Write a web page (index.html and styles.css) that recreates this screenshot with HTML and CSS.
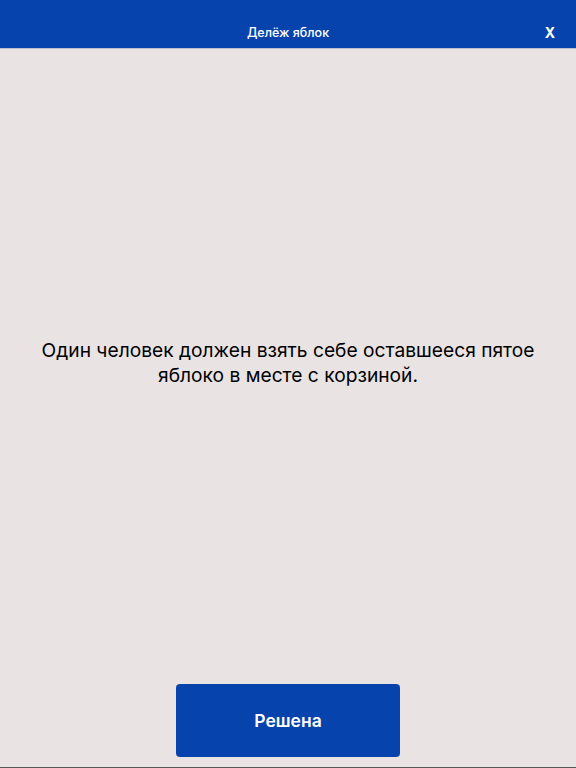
FILE: index.html
```html
<!DOCTYPE html>
<html lang="ru">
<head>
<meta charset="utf-8">
<title>Делёж яблок</title>
<link rel="stylesheet" href="styles.css">
</head>
<body>
<div class="screen">
  <header class="topbar">
    <div class="title">Делёж яблок</div>
    <div class="close">X</div>
  </header>
  <main class="content">
    <p class="message">Один человек должен взять себе оставшееся пятое яблоко в месте с корзиной.</p>
  </main>
  <footer class="actions">
    <button class="solve">Решена</button>
  </footer>
</div>
</body>
</html>
```
FILE: styles.css
```css
html, body {
  margin: 0;
  padding: 0;
}
body {
  font-family: Inter, Roboto, "Liberation Sans", sans-serif;
  background: #e9e3e3;
}
.screen {
  width: 576px;
  height: 768px;
  display: flex;
  flex-direction: column;
  box-sizing: border-box;
  border-bottom: 1px solid #58585a;
  background: #e9e3e3;
}
.topbar {
  height: 49px;
  flex: none;
  background: #0743ad;
  border-bottom: 1px solid #b9bccb;
  box-sizing: border-box;
  position: relative;
  display: flex;
  align-items: flex-end;
  justify-content: center;
  padding-bottom: 7px;
}
.title {
  color: #ffffff;
  font-size: 12.5px;
  font-weight: 500;
  line-height: 16px;
}
.close {
  position: absolute;
  right: 21px;
  bottom: 7px;
  color: #ffffff;
  font-size: 14px;
  font-weight: 700;
  line-height: 16px;
}
.content {
  flex: 1;
  display: flex;
  align-items: center;
  justify-content: center;
  padding: 0 20px;
}
.message {
  margin: 0;
  margin-top: -8px;
  text-align: center;
  font-size: 19.2px;
  line-height: 25px;
  color: #000000;
}
.actions {
  flex: none;
  display: flex;
  justify-content: center;
  padding-bottom: 10px;
}
.solve {
  width: 224px;
  height: 73px;
  border: none;
  border-radius: 4px;
  background: #0743ad;
  color: #ffffff;
  font-family: Inter, Roboto, "Liberation Sans", sans-serif;
  font-size: 17.5px;
  font-weight: 600;
  padding: 0;
}
```
